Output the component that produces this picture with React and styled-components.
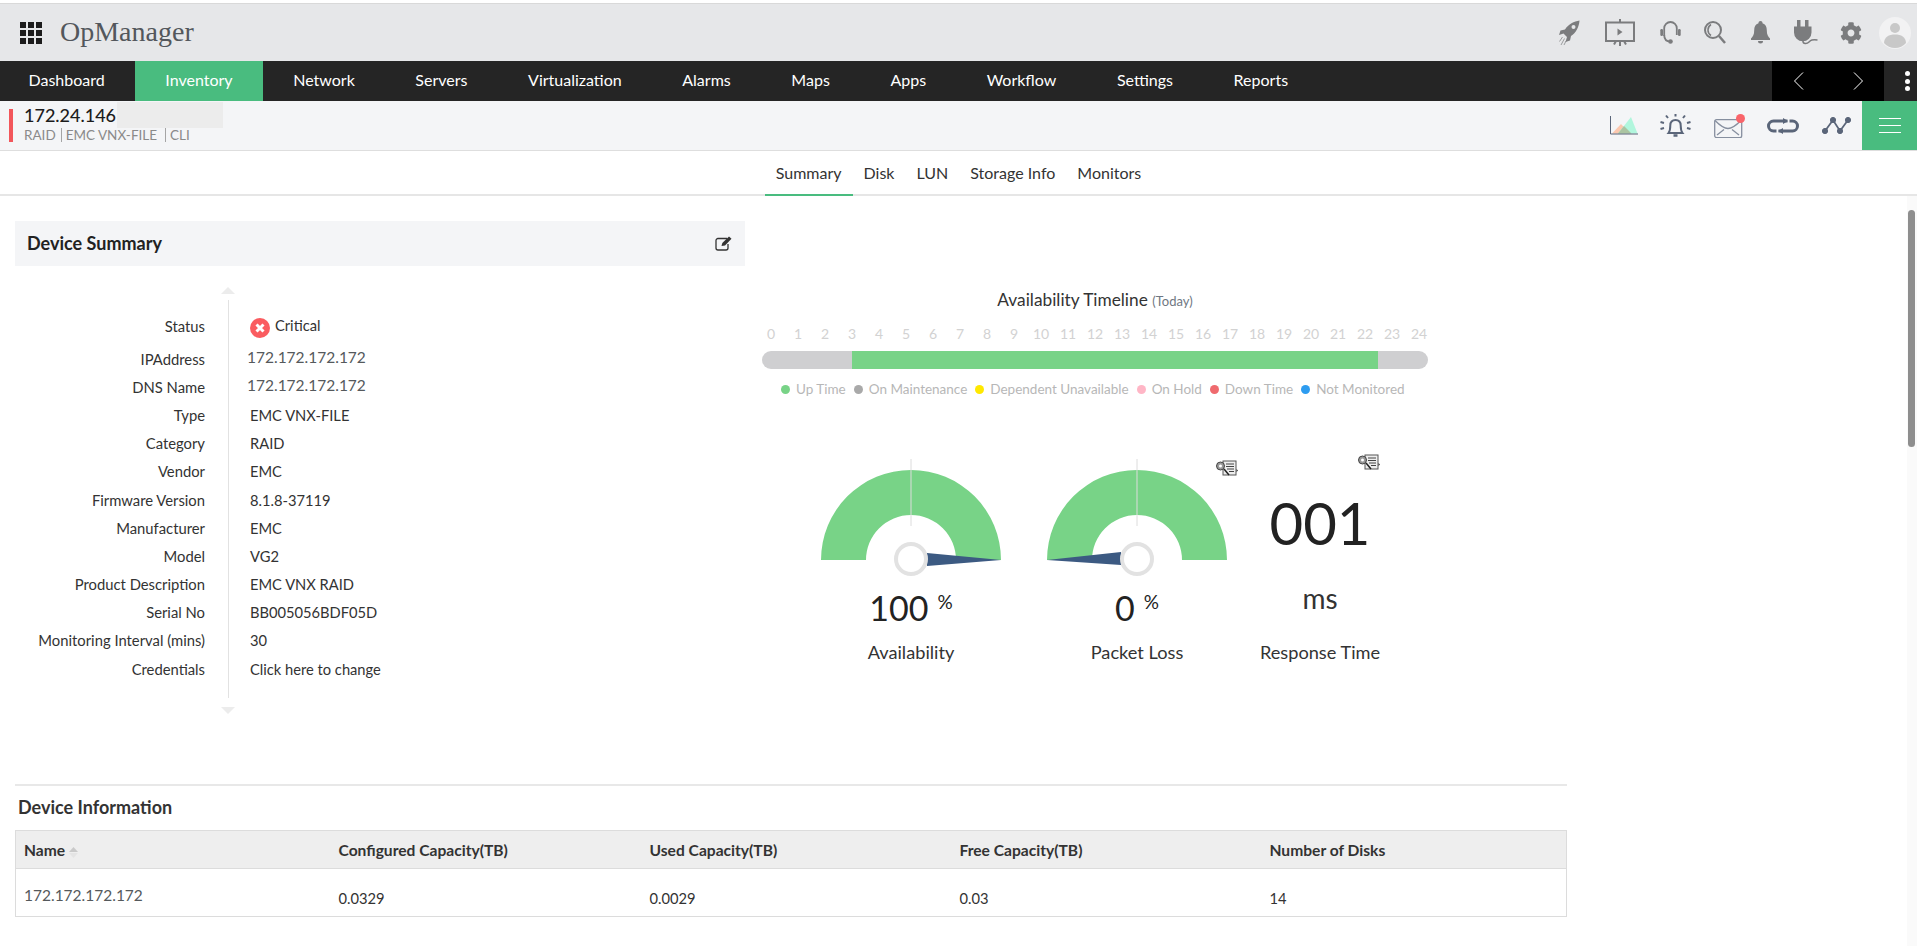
import React from 'react';
import styled, { createGlobalStyle } from 'styled-components';
import { FaCog } from 'react-icons/fa';

const GlobalStyle = createGlobalStyle`
  html, body {
    margin: 0;
    height: 100%;
    background: #fff;
    overflow: hidden;
  }
  body {
    font-family: Lato, "Open Sans", sans-serif;
    color: #222;
  }
  * { box-sizing: border-box; }
`;

const Page = styled.div`
  height: 100vh;
  display: flex;
  flex-direction: column;
  position: relative;
  overflow: hidden;
  padding-top: 3px;
`;

/* top header */
const Header = styled.header`
  height: 58px;
  flex: none;
  display: flex;
  align-items: center;
  background: #e6e7e9;
  border-top: 1px solid #d9d9d9;
  padding: 0 6px 0 20px;
`;

const AppGrid = styled.div`
  display: grid;
  grid-template-columns: repeat(3, 6px);
  grid-auto-rows: 6px;
  gap: 2px;
`;

const AppDot = styled.span`
  background: #1c1c1c;
`;

const Logo = styled.div`
  font-family: "Liberation Serif", serif;
  font-size: 28px;
  font-weight: 400;
  color: #53575c;
  margin: 0 0 2px 18px;
`;

const HeaderIcons = styled.div`
  margin-left: auto;
  display: flex;
  align-items: center;
`;

const IconSlot = styled.span`
  display: flex;
  flex: none;
  color: ${(p) => p.$color || '#7b7c7e'};
  margin-left: ${(p) => p.$gap || 0}px;
`;

/* main navigation */
const Nav = styled.nav`
  height: 40px;
  flex: none;
  display: flex;
  background: #252525;
`;

const NavItem = styled.a`
  display: flex;
  align-items: center;
  padding: 0 30.3px 4px;
  font-size: 16px;
  color: #fff;
  background: ${(p) => (p.$active ? '#49bc7f' : 'transparent')};
  &:first-child { padding-left: 28.5px; }
`;

const NavPager = styled.div`
  margin-left: auto;
  width: 112px;
  display: flex;
  align-items: center;
  background: #000;
  padding-left: 22px;
  gap: 49px;
`;

const NavMore = styled.div`
  width: 33px;
  display: flex;
  flex-direction: column;
  align-items: center;
  justify-content: center;
  gap: 2.5px;
  padding-left: 13px;
`;

const MoreDot = styled.span`
  width: 5px;
  height: 5px;
  border-radius: 50%;
  background: #fff;
`;

/* device strip */
const DeviceBar = styled.div`
  height: 50px;
  flex: none;
  display: flex;
  align-items: stretch;
  background: #f4f5f7;
  border-bottom: 1px solid #dedede;
`;

const DeviceMark = styled.div`
  width: 4px;
  height: 33px;
  margin: 8px 11px 0 9px;
  background: #f2565b;
`;

const DeviceText = styled.div`
  display: flex;
  flex-direction: column;
  padding-top: 1px;
`;

const DeviceTitleRow = styled.div`
  display: flex;
  align-items: center;
  height: 26px;
`;

const DeviceTitle = styled.div`
  font-size: 18px;
  font-weight: 500;
  color: #1c1c1c;
`;

const TitleMask = styled.div`
  width: 106px;
  height: 26px;
  margin-left: 1px;
  background: #ececec;
`;

const DeviceSub = styled.div`
  display: flex;
  align-items: center;
  font-size: 13.5px;
  line-height: 14px;
  color: #8a8a8a;
`;

const SubPart = styled.span`
  border-left: ${(p) => (p.$first ? 'none' : '1px solid #a5a5a5')};
  padding-left: ${(p) => (p.$first ? 0 : 4)}px;
  margin-left: ${(p) => (p.$gap || 0)}px;
`;

const DeviceActions = styled.div`
  margin-left: auto;
  display: flex;
  align-items: center;
`;

const MenuButton = styled.div`
  width: 55px;
  align-self: stretch;
  margin-left: 11px;
  background: #49bc7f;
  display: flex;
  flex-direction: column;
  align-items: center;
  justify-content: center;
  gap: 6px;
`;

const MenuLine = styled.span`
  width: 22px;
  height: 1px;
  background: #fff;
`;

/* tabs */
const Tabs = styled.div`
  height: 45px;
  flex: none;
  display: flex;
  justify-content: center;
  border-bottom: 2px solid #e6e6e6;
`;

const Tab = styled.a`
  height: 45px;
  display: flex;
  align-items: center;
  padding: 0 11px;
  font-size: 16px;
  color: #333;
  border-bottom: 2px solid ${(p) => (p.$active ? '#49bc7f' : 'transparent')};
`;

/* content */
const Main = styled.main`
  flex: 1;
  width: 1567px;
  padding: 25px 0 0 15px;
`;

const TopRow = styled.div`
  height: 563px;
  display: flex;
`;

const SummaryPanel = styled.section`
  width: 730px;
  flex: none;
`;

const PanelHeader = styled.div`
  height: 45px;
  display: flex;
  align-items: center;
  justify-content: space-between;
  padding: 0 12px;
  background: #f4f5f7;
`;

const PanelTitle = styled.h2`
  margin: 0 0 2px;
  font-size: 18px;
  font-weight: 700;
  color: #222;
`;

const DetailGrid = styled.div`
  margin-top: 21px;
  height: 427px;
  display: grid;
  grid-template-columns: 190px 46px 1fr;
  grid-template-rows: 22px 36px repeat(12, 28.2px) 1fr;
  font-size: 14.8px;
  color: #333;
`;

const Rail = styled.div`
  grid-column: 2;
  grid-row: 1 / -1;
  display: flex;
  flex-direction: column;
  align-items: center;
`;

const RailLine = styled.div`
  flex: 1;
  width: 1px;
  margin: 6px 0 9px;
  background: #e2e2e2;
`;

const RailArrow = styled.div`
  width: 0;
  height: 0;
  border-left: 7px solid transparent;
  border-right: 7px solid transparent;
  border-bottom: ${(p) => (p.$down ? 'none' : '7px solid #ececec')};
  border-top: ${(p) => (p.$down ? '7px solid #ececec' : 'none')};
`;

const DetailLabel = styled.div`
  grid-column: 1;
  grid-row: ${(p) => p.$row};
  align-self: center;
  text-align: right;
  padding-bottom: ${(p) => (p.$row === 2 ? 3 : 1)}px;
`;

const DetailValue = styled.div`
  grid-column: 3;
  grid-row: ${(p) => p.$row};
  align-self: center;
  display: flex;
  align-items: center;
  gap: 5px;
  padding-left: ${(p) => (p.$ip ? 0 : 3)}px;
  margin-left: -4px;
  padding-bottom: ${(p) => (p.$ip ? 5 : 1)}px;
  font-size: ${(p) => (p.$ip ? 15.5 : 14.7)}px;
  color: ${(p) => (p.$ip ? '#55595c' : '#333')};
`;

const StatusDot = styled.svg`
  flex: none;
  margin-top: 3px;
`;

const StatusText = styled.span`
  padding-bottom: 4px;
`;

const AvailPanel = styled.section`
  width: 666px;
  margin-left: 17px;
  padding-top: 70px;
  flex: none;
`;

const TimelineTitle = styled.div`
  height: 18px;
  line-height: 18px;
  text-align: center;
  font-size: 17.3px;
  color: #333;
`;

const TimelineToday = styled.span`
  font-size: 13px;
  color: #6f7782;
`;

const Hours = styled.div`
  margin-top: 16px;
  height: 18px;
  display: flex;
  justify-content: space-between;
`;

const Hour = styled.span`
  width: 18px;
  text-align: center;
  font-size: 14px;
  line-height: 18px;
  color: #d2d2d2;
`;

const TimeBar = styled.div`
  margin-top: 8px;
  height: 18px;
  border-radius: 9px;
  background: #cfcfd1;
  padding-left: 90px;
`;

const TimeBarFill = styled.div`
  width: 526px;
  height: 100%;
  background: #78d387;
`;

const Legend = styled.div`
  margin-top: 11px;
  height: 18px;
  display: flex;
  align-items: center;
  padding-left: 19px;
  gap: 8px;
`;

const LegendItem = styled.span`
  display: flex;
  align-items: center;
  gap: 6px;
  font-size: 13.5px;
  color: #b7b7b7;
`;

const LegendDot = styled.span`
  width: 9px;
  height: 9px;
  border-radius: 50%;
  background: ${(p) => p.$color};
`;

const Gauges = styled.div`
  margin-top: 61px;
  display: flex;
  padding-left: 36px;
`;

const GaugeColumn = styled.div`
  position: relative;
  width: ${(p) => p.$width}px;
  display: flex;
  flex-direction: column;
  align-items: center;
`;

const ReportSlot = styled.span`
  position: absolute;
  left: ${(p) => p.$left}px;
  top: ${(p) => p.$top}px;
  display: flex;
`;

const GaugeValue = styled.div`
  margin-top: 8px;
  height: 40px;
  line-height: 40px;
  font-size: 34px;
  color: #222;
  white-space: nowrap;
`;

const GaugeUnit = styled.span`
  font-size: 19px;
  margin-left: 9px;
  position: relative;
  top: -12px;
`;

const GaugeLabel = styled.div`
  margin-top: ${(p) => p.$top || 13}px;
  font-size: 18.2px;
  line-height: 22px;
  color: #333;
  white-space: nowrap;
`;

const BigNumber = styled.div`
  margin-top: 34px;
  height: 60px;
  line-height: 60px;
  font-size: 58px;
  color: #222;
`;

const BigUnit = styled.div`
  margin-top: 25px;
  height: 40px;
  line-height: 40px;
  font-size: 28px;
  color: #333;
`;

const InfoSection = styled.section`
  border-top: 2px solid #e8e8e8;
`;

const InfoTitle = styled.h3`
  margin: 0;
  height: 44px;
  padding: 0 0 2px 3px;
  display: flex;
  align-items: center;
  font-size: 18px;
  font-weight: 700;
  color: #333;
`;

const Table = styled.table`
  width: 100%;
  table-layout: fixed;
  border-collapse: collapse;
  border: 1px solid #dcdcdc;
`;

const HeadCell = styled.th`
  width: ${(p) => p.$width || 'auto'};
  height: 38px;
  padding: 0 8px;
  text-align: left;
  font-size: 15.6px;
  font-weight: 700;
  color: #333;
  background: #eee;
  border-bottom: 1px solid #dcdcdc;
`;

const BodyCell = styled.td`
  height: 48px;
  padding: ${(p) => (p.$name ? '5px 8px 0' : '10px 8px 0')};
  font-size: ${(p) => (p.$name ? 15.5 : 14.7)}px;
  color: ${(p) => (p.$name ? '#55595c' : '#333')};
`;

const SortIcon = styled.svg`
  margin-left: 4px;
  vertical-align: -2px;
`;

const ScrollTrack = styled.div`
  position: absolute;
  right: 0;
  top: 196px;
  bottom: 0;
  width: 10px;
  padding: 14px 2px 0 1px;
  background: #fafafa;
`;

const ScrollThumb = styled.div`
  width: 7px;
  height: 237px;
  border-radius: 4px;
  background: #8e8e8e;
`;

/* drawings */
const RocketIcon = () => (
  <svg width="21" height="25" viewBox="0 0 21 25" fill="currentColor">
    <path d="M20.500.500C15 1.500 9.500 4 6 9.500L1.500 10.500 0 15l4.500-1.500 3.500 3.500-1.500 5L11 20.500l1-4.500c5-3 8-9 8.500-15.500z" />
    <circle cx="14.500" cy="7" r="2" fill="#e6e7e9" />
    <path d="M3.500 17l-3 4.500M5.500 18.500L2 25M7 21l-2 4" stroke="currentColor" strokeWidth="1" fill="none" opacity=".7" />
  </svg>
);

const PresentationIcon = () => (
  <svg width="30" height="27" viewBox="0 0 30 27" fill="none" stroke="currentColor" strokeWidth="2">
    <rect x="1" y="3.500" width="28" height="18.500" />
    <path d="M15 0v3.500M15 22v5M9 25.500l2-3.500M21 25.500l-2-3.500" />
    <path d="M12.500 9.500v7l5-3.500z" fill="currentColor" stroke="none" />
  </svg>
);

const HeadsetIcon = () => (
  <svg width="21" height="24" viewBox="0 0 21 24" fill="none" stroke="currentColor" strokeWidth="1.800">
    <path d="M4.200 15V7.300a6.300 6.300 0 0 1 12.600 0V14" />
    <path d="M4.200 14c0 4 2 6.500 6.300 6.500" />
    <rect x="0.300" y="8" width="2.700" height="7" rx="1.200" fill="currentColor" stroke="none" />
    <rect x="18" y="8" width="2.700" height="7" rx="1.200" fill="currentColor" stroke="none" />
    <circle cx="10.500" cy="20.500" r="2.300" fill="currentColor" stroke="none" />
  </svg>
);

const SearchIcon = () => (
  <svg width="22" height="23" viewBox="0 0 22 23" fill="none" stroke="currentColor">
    <circle cx="9" cy="9" r="8" strokeWidth="2" />
    <path d="M7 3.500a6.500 6.500 0 0 0 0 11" strokeWidth="1.500" />
    <path d="M15 15l6 7" strokeWidth="2.500" />
  </svg>
);

const BellIcon = () => (
  <svg width="19" height="23" viewBox="0 0 19 23" fill="currentColor">
    <path d="M9.500 0a2 2 0 0 1 2 2.200c3 1 4.300 3.600 4.300 7 0 4.400 1.300 6.400 3.200 8.300v1.500H0v-1.500c1.900-1.900 3.200-3.900 3.200-8.300 0-3.400 1.300-6 4.300-7a2 2 0 0 1 2-2.200z" />
    <path d="M7 20h5a2.500 2.500 0 0 1-5 0z" />
  </svg>
);

const PlugIcon = () => (
  <svg width="25" height="25" viewBox="0 0 25 25" fill="currentColor">
    <rect x="4" y="0" width="3.500" height="8" />
    <rect x="12" y="0" width="3.500" height="8" />
    <path d="M1 6.500h17.500v6a8.750 8.750 0 0 1-17.500 0z" />
    <path d="M10 20v1.500c0 2.500 4 2.500 6 .5s3-2.500 8.500-2" fill="none" stroke="currentColor" strokeWidth="1.500" />
  </svg>
);

const AvatarIcon = () => (
  <svg width="32" height="32" viewBox="0 0 32 32">
    <circle cx="16" cy="16" r="16" fill="#f2f2f3" />
    <circle cx="16" cy="11" r="5" fill="#c8c8c8" />
    <path d="M5 26c0-6 5-8.500 11-8.500S27 20 27 26a14.500 14.500 0 0 1-22 0z" fill="#c8c8c8" />
  </svg>
);

const ChartIcon = () => (
  <svg width="28" height="19" viewBox="0 0 28 19" fill="none">
    <path d="M2 17.500L11 8l9 9.500z" fill="#fcc8af" />
    <path d="M8 17.500L21 1l6.500 16.500z" fill="#b1f6dd" />
    <path d="M8 17.500l6-7.500 7.500 7.500z" fill="#abc4a2" />
    <path d="M.5 0v18H28" stroke="#5a6579" />
  </svg>
);

const AlertIcon = () => (
  <svg width="31" height="24" viewBox="0 0 31 24" fill="none" stroke="#5a6579" strokeWidth="2">
    <path d="M8.500 19c1.500-2 1.800-4 1.800-7.500 0-3.500 2-5.500 5.200-5.500s5.200 2 5.200 5.500c0 3.500.3 5.500 1.800 7.500z" />
    <path d="M13.500 21.500h4" strokeWidth="2.500" />
    <path d="M15.500 0v2.500M6 1.500l2 2.500M25 1.500L23 4M.5 8l3.500 1M30.500 8L27 9M.5 15l3.500-1M30.500 15L27 14" />
  </svg>
);

const MailIcon = () => (
  <svg width="31" height="24" viewBox="0 0 31 24" fill="none" stroke="#868f9f" strokeWidth="1.300">
    <rect x="0.700" y="5.700" width="27" height="18" rx="2" />
    <path d="M1 6.500c4 4 8 8 13 8s9-4 13-8M3 21l7-5.500M25 21l-7-5.500" />
    <circle cx="26.500" cy="4.500" r="4.500" fill="#f9646a" stroke="none" />
  </svg>
);

const RepeatIcon = () => (
  <svg width="32" height="16" viewBox="0 0 32 16" fill="none">
    <rect x="1.500" y="3" width="29" height="10" rx="5" stroke="#5a6579" strokeWidth="3" />
    <path d="M21.500 1v4M10.500 11v4" stroke="#f4f5f7" strokeWidth="2" />
    <path d="M16 0l5 3-5 3zM16 10l-5 3 5 3z" fill="#5a6579" />
  </svg>
);

const NodesIcon = () => (
  <svg width="29" height="17" viewBox="0 0 29 17" fill="#5a6579" stroke="#5a6579">
    <path d="M3 14l8-11 7 11 8-11" fill="none" strokeWidth="1.800" />
    <circle cx="3" cy="14" r="2.600" />
    <circle cx="11" cy="3" r="2.600" />
    <circle cx="18" cy="14" r="2.600" />
    <circle cx="26" cy="3" r="2.600" />
  </svg>
);

const EditIcon = () => (
  <svg width="18" height="15" viewBox="0 0 18 15" fill="none" stroke="#333" strokeWidth="1.300">
    <path d="M12 2.500H3a2 2 0 0 0-2 2V12a2 2 0 0 0 2 2h8a2 2 0 0 0 2-2V8" />
    <path d="M6.500 10l.8-3L14 .5l2.500 2.300L10 9.500z" fill="#333" stroke="none" />
  </svg>
);

const ReportIcon = () => (
  <svg width="22" height="16" viewBox="0 0 22 16" fill="none">
    <rect x="7" y="1" width="13" height="14" fill="#eee" stroke="#555" />
    <path d="M10 4h8M10 6.500h8M11 9h7M13 11.500h5" stroke="#444" />
    <circle cx="4.500" cy="6" r="4" fill="#999" stroke="#444" />
    <circle cx="4.500" cy="6" r="1.500" fill="#fff" />
    <path d="M8 9l5 6" stroke="#222" strokeWidth="1.500" />
    <path d="M20.500 9l1.500 1.500-1.500 1.500z" fill="#333" />
  </svg>
);

const Chevron = ({ flip }) => (
  <svg width="10" height="18" viewBox="0 0 10 18" fill="none" stroke="#fff" strokeWidth="1">
    <path d={flip ? 'M1 .5L9.500 9 1 17.500' : 'M9 .5L.5 9 9 17.500'} />
  </svg>
);

const Gauge = ({ needle }) => (
  <svg width="190" height="121" viewBox="0 0 190 121">
    <path d="M5 101a90 90 0 0 1 180 0h-45a45 45 0 0 0-90 0z" fill="#78d387" />
    <path d="M95 0v67" stroke="#dcdcdc" strokeWidth="1" />
    <polygon points={needle} fill="#3c5a82" />
    <circle cx="95" cy="100" r="15" fill="#fff" stroke="#e2e2e2" strokeWidth="4" />
  </svg>
);

const navItems = ['Dashboard', 'Inventory', 'Network', 'Servers', 'Virtualization', 'Alarms', 'Maps', 'Apps', 'Workflow', 'Settings', 'Reports'];
const tabs = ['Summary', 'Disk', 'LUN', 'Storage Info', 'Monitors'];
const details = [
  ['IPAddress', '172.172.172.172', true],
  ['DNS Name', '172.172.172.172', true],
  ['Type', 'EMC VNX-FILE'],
  ['Category', 'RAID'],
  ['Vendor', 'EMC'],
  ['Firmware Version', '8.1.8-37119'],
  ['Manufacturer', 'EMC'],
  ['Model', 'VG2'],
  ['Product Description', 'EMC VNX RAID'],
  ['Serial No', 'BB005056BDF05D'],
  ['Monitoring Interval (mins)', '30'],
  ['Credentials', 'Click here to change'],
];
const legend = [
  ['Up Time', '#78d387'],
  ['On Maintenance', '#a9a9a9'],
  ['Dependent Unavailable', '#ffe800'],
  ['On Hold', '#ffb6c6'],
  ['Down Time', '#ef6a6e'],
  ['Not Monitored', '#2d9cf0'],
];

export default function App() {
  return (
    <>
      <GlobalStyle />
      <Page>
        <Header>
          <AppGrid>
            {Array.from({ length: 9 }, (_, i) => <AppDot key={i} />)}
          </AppGrid>
          <Logo>OpManager</Logo>
          <HeaderIcons>
            <IconSlot><RocketIcon /></IconSlot>
            <IconSlot $gap={25}><PresentationIcon /></IconSlot>
            <IconSlot $gap={25}><HeadsetIcon /></IconSlot>
            <IconSlot $gap={23}><SearchIcon /></IconSlot>
            <IconSlot $gap={25}><BellIcon /></IconSlot>
            <IconSlot $gap={23}><PlugIcon /></IconSlot>
            <IconSlot $gap={22}><FaCog size={22} /></IconSlot>
            <IconSlot $gap={17}><AvatarIcon /></IconSlot>
          </HeaderIcons>
        </Header>

        <Nav>
          {navItems.map((item) => (
            <NavItem key={item} $active={item === 'Inventory'}>{item}</NavItem>
          ))}
          <NavPager>
            <Chevron />
            <Chevron flip />
          </NavPager>
          <NavMore>
            <MoreDot />
            <MoreDot />
            <MoreDot />
          </NavMore>
        </Nav>

        <DeviceBar>
          <DeviceMark />
          <DeviceText>
            <DeviceTitleRow>
              <DeviceTitle>172.24.146</DeviceTitle>
              <TitleMask />
            </DeviceTitleRow>
            <DeviceSub>
              <SubPart $first>RAID</SubPart>
              <SubPart $gap={5}>EMC VNX-FILE</SubPart>
              <SubPart $gap={8}>CLI</SubPart>
            </DeviceSub>
          </DeviceText>
          <DeviceActions>
            <IconSlot><ChartIcon /></IconSlot>
            <IconSlot $gap={22}><AlertIcon /></IconSlot>
            <IconSlot $gap={23}><MailIcon /></IconSlot>
            <IconSlot $gap={22}><RepeatIcon /></IconSlot>
            <IconSlot $gap={23}><NodesIcon /></IconSlot>
            <MenuButton>
              <MenuLine />
              <MenuLine />
              <MenuLine />
            </MenuButton>
          </DeviceActions>
        </DeviceBar>

        <Tabs>
          {tabs.map((tab) => (
            <Tab key={tab} $active={tab === 'Summary'}>{tab}</Tab>
          ))}
        </Tabs>

        <Main>
          <TopRow>
            <SummaryPanel>
              <PanelHeader>
                <PanelTitle>Device Summary</PanelTitle>
                <EditIcon />
              </PanelHeader>
              <DetailGrid>
                <Rail>
                  <RailArrow />
                  <RailLine />
                  <RailArrow $down />
                </Rail>
                <DetailLabel $row={2}>Status</DetailLabel>
                <DetailValue $row={2}>
                  <StatusDot width="20" height="20" viewBox="0 0 20 20">
                    <circle cx="10" cy="10" r="10" fill="#fa5c60" />
                    <path d="M6.500 6.500l7 7M13.500 6.500l-7 7" stroke="#fff" strokeWidth="3" />
                  </StatusDot>
                  <StatusText>Critical</StatusText>
                </DetailValue>
                {details.map(([label, value, ip], i) => (
                  <React.Fragment key={label}>
                    <DetailLabel $row={i + 3}>{label}</DetailLabel>
                    <DetailValue $row={i + 3} $ip={ip}>{value}</DetailValue>
                  </React.Fragment>
                ))}
              </DetailGrid>
            </SummaryPanel>

            <AvailPanel>
              <TimelineTitle>
                Availability Timeline <TimelineToday>(Today)</TimelineToday>
              </TimelineTitle>
              <Hours>
                {Array.from({ length: 25 }, (_, i) => <Hour key={i}>{i}</Hour>)}
              </Hours>
              <TimeBar>
                <TimeBarFill />
              </TimeBar>
              <Legend>
                {legend.map(([name, color]) => (
                  <LegendItem key={name}>
                    <LegendDot $color={color} />
                    {name}
                  </LegendItem>
                ))}
              </Legend>
              <Gauges>
                <GaugeColumn $width={226}>
                  <Gauge needle="111,94 111,107 185,101" />
                  <GaugeValue>100<GaugeUnit>%</GaugeUnit></GaugeValue>
                  <GaugeLabel>Availability</GaugeLabel>
                </GaugeColumn>
                <GaugeColumn $width={226}>
                  <ReportSlot $left={192} $top={1}><ReportIcon /></ReportSlot>
                  <Gauge needle="79,93 79,106 5,101" />
                  <GaugeValue>0<GaugeUnit>%</GaugeUnit></GaugeValue>
                  <GaugeLabel>Packet Loss</GaugeLabel>
                </GaugeColumn>
                <GaugeColumn $width={140}>
                  <ReportSlot $left={108} $top={-5}><ReportIcon /></ReportSlot>
                  <BigNumber>001</BigNumber>
                  <BigUnit>ms</BigUnit>
                  <GaugeLabel $top={23}>Response Time</GaugeLabel>
                </GaugeColumn>
              </Gauges>
            </AvailPanel>
          </TopRow>

          <InfoSection>
            <InfoTitle>Device Information</InfoTitle>
            <Table>
              <thead>
                <tr>
                  <HeadCell $width="315px">
                    Name
                    <SortIcon width="9" height="11" viewBox="0 0 9 11">
                      <path d="M4.500 0L9 5H0z" fill="#c9c9c9" />
                      <path d="M4.500 11L9 6H0z" fill="#e4e4e4" />
                    </SortIcon>
                  </HeadCell>
                  <HeadCell $width="311px">Configured Capacity(TB)</HeadCell>
                  <HeadCell $width="310px">Used Capacity(TB)</HeadCell>
                  <HeadCell $width="310px">Free Capacity(TB)</HeadCell>
                  <HeadCell>Number of Disks</HeadCell>
                </tr>
              </thead>
              <tbody>
                <tr>
                  <BodyCell $name>172.172.172.172</BodyCell>
                  <BodyCell>0.0329</BodyCell>
                  <BodyCell>0.0029</BodyCell>
                  <BodyCell>0.03</BodyCell>
                  <BodyCell>14</BodyCell>
                </tr>
              </tbody>
            </Table>
          </InfoSection>
        </Main>
        <ScrollTrack>
          <ScrollThumb />
        </ScrollTrack>
      </Page>
    </>
  );
}
